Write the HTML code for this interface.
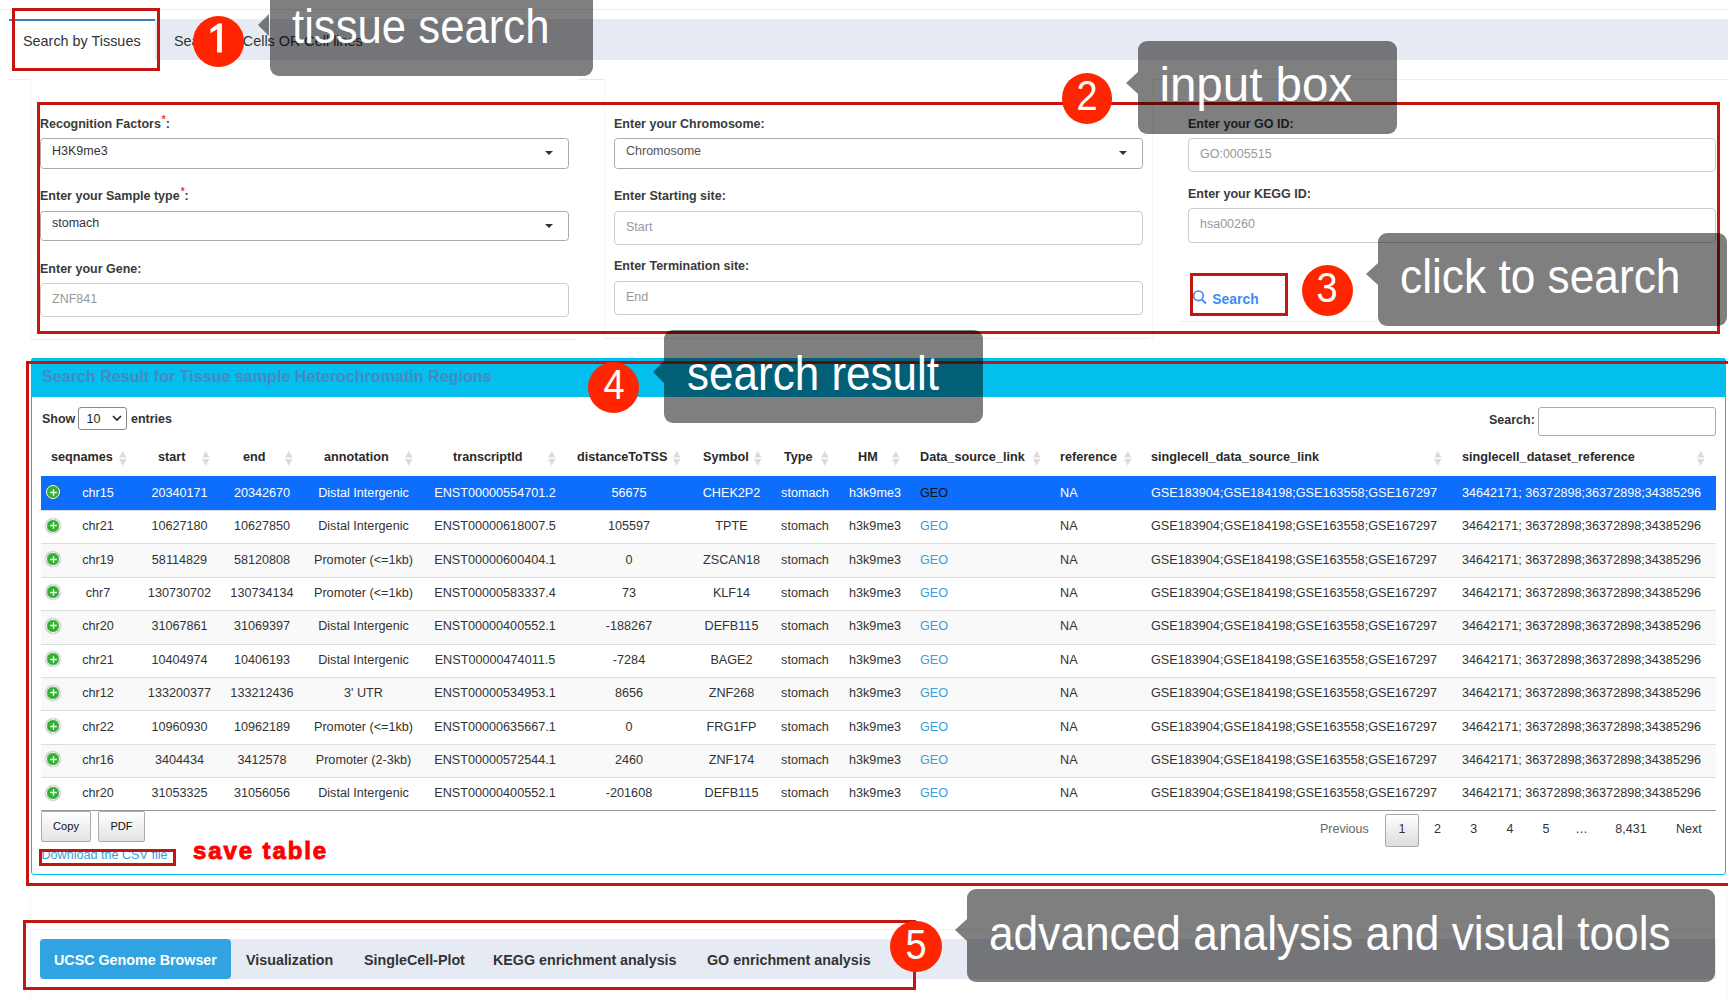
<!DOCTYPE html><html><head><meta charset="utf-8"><style>
html,body{margin:0;padding:0;}
body{width:1728px;height:1002px;position:relative;overflow:hidden;background:#fff;font-family:"Liberation Sans",sans-serif;}
.a,.rb,.t,.c,.l{position:absolute;box-sizing:content-box;}
.c{width:600px;height:40px;line-height:40px;text-align:center;white-space:nowrap;}
.l{height:40px;line-height:40px;white-space:nowrap;}
.t{white-space:nowrap;}
.circ{position:absolute;border-radius:50%;background:#ff2500;color:#fff;text-align:center;font-family:"Liberation Sans",sans-serif;}
.call{position:absolute;background:rgba(0,0,0,0.5);border-radius:9px;}
.arrow{position:absolute;width:0;height:0;border-style:solid;border-color:transparent rgba(0,0,0,0.5) transparent transparent;}
.ct{position:absolute;color:#fff;white-space:nowrap;line-height:1;transform-origin:0 0;}
</style></head><body>

<div class="a" style="left:0px;top:9px;width:1728px;height:1px;background:#ececec"></div>
<div class="a" style="left:155px;top:19px;width:1573px;height:41px;background:#e6ebf3"></div>
<div class="a" style="left:9px;top:19px;width:146px;height:51px;background:#fff"></div>
<div class="a" style="left:9px;top:19px;width:146px;height:2px;background:#3a7fb8"></div>
<div class="l" style="left:23px;top:21px;font-size:14.4px;color:#333;font-weight:normal;">Search by Tissues</div>
<div class="l" style="left:174px;top:21px;font-size:14.4px;color:#333;font-weight:normal;">Search by Cells OR Cell lines</div>
<div class="a" style="left:9px;top:79px;width:22px;height:1px;background:#ececec"></div>
<div class="a" style="left:30px;top:79px;width:1px;height:261px;background:#f4f4f4"></div>
<div class="a" style="left:31px;top:339px;width:546px;height:1px;background:#ededed"></div>
<div class="a" style="left:604px;top:79px;width:1px;height:261px;background:#f4f4f4"></div>
<div class="a" style="left:578px;top:79px;width:27px;height:1px;background:#e8e8e8"></div>
<div class="a" style="left:605px;top:338px;width:545px;height:1px;background:#ededed"></div>
<div class="a" style="left:1152px;top:79px;width:1px;height:261px;background:#f4f4f4"></div>
<div class="a" style="left:1152px;top:79px;width:576px;height:1px;background:#ececec"></div>
<div class="a" style="left:1180px;top:321px;width:200px;height:1px;background:#ededed"></div>
<div class="l" style="left:40px;top:103.9px;font-size:12.5px;color:#3a3a3a;font-weight:bold;">Recognition Factors<span style="color:#e33;font-size:10px;position:relative;top:-4.5px;margin-left:1px">*</span>:</div>
<div class="a" style="left:40px;top:138px;width:529px;height:30.5px;background:#fff;border:1px solid #aaa;border-radius:3.5px;box-sizing:border-box"></div>
<div class="l" style="left:52px;top:130.65px;font-size:12.5px;color:#333;font-weight:normal;">H3K9me3</div>
<div class="a" style="left:545px;top:151.25px;width:0;height:0;border-left:4px solid transparent;border-right:4px solid transparent;border-top:4.5px solid #333"></div>
<div class="l" style="left:40px;top:175.9px;font-size:12.5px;color:#3a3a3a;font-weight:bold;">Enter your Sample type<span style="color:#e33;font-size:10px;position:relative;top:-4.5px;margin-left:1px">*</span>:</div>
<div class="a" style="left:40px;top:211px;width:529px;height:30px;background:#fff;border:1px solid #aaa;border-radius:3.5px;box-sizing:border-box"></div>
<div class="l" style="left:52px;top:203.4px;font-size:12.5px;color:#333;font-weight:normal;">stomach</div>
<div class="a" style="left:545px;top:224.0px;width:0;height:0;border-left:4px solid transparent;border-right:4px solid transparent;border-top:4.5px solid #333"></div>
<div class="l" style="left:40px;top:248.89999999999998px;font-size:12.5px;color:#3a3a3a;font-weight:bold;">Enter your Gene:</div>
<div class="a" style="left:40px;top:283px;width:529px;height:34px;background:#fff;border:1px solid #ccc;border-radius:4px;box-sizing:border-box"></div>
<div class="l" style="left:52px;top:278.9px;font-size:12.5px;color:#999;font-weight:normal;">ZNF841</div>
<div class="l" style="left:614px;top:103.9px;font-size:12.5px;color:#3a3a3a;font-weight:bold;">Enter your Chromosome:</div>
<div class="a" style="left:614px;top:138px;width:529px;height:30.5px;background:#fff;border:1px solid #aaa;border-radius:3.5px;box-sizing:border-box"></div>
<div class="l" style="left:626px;top:130.65px;font-size:12.5px;color:#555;font-weight:normal;">Chromosome</div>
<div class="a" style="left:1119px;top:151.25px;width:0;height:0;border-left:4px solid transparent;border-right:4px solid transparent;border-top:4.5px solid #333"></div>
<div class="l" style="left:614px;top:175.9px;font-size:12.5px;color:#3a3a3a;font-weight:bold;">Enter Starting site:</div>
<div class="a" style="left:614px;top:211px;width:529px;height:34px;background:#fff;border:1px solid #ccc;border-radius:4px;box-sizing:border-box"></div>
<div class="l" style="left:626px;top:206.9px;font-size:12.5px;color:#999;font-weight:normal;">Start</div>
<div class="l" style="left:614px;top:245.89999999999998px;font-size:12.5px;color:#3a3a3a;font-weight:bold;">Enter Termination site:</div>
<div class="a" style="left:614px;top:281px;width:529px;height:34px;background:#fff;border:1px solid #ccc;border-radius:4px;box-sizing:border-box"></div>
<div class="l" style="left:626px;top:276.9px;font-size:12.5px;color:#999;font-weight:normal;">End</div>
<div class="l" style="left:1188px;top:103.9px;font-size:12.5px;color:#3a3a3a;font-weight:bold;">Enter your GO ID:</div>
<div class="a" style="left:1188px;top:138px;width:528px;height:33.80000000000001px;background:#fff;border:1px solid #ccc;border-radius:4px;box-sizing:border-box"></div>
<div class="l" style="left:1200px;top:133.8px;font-size:12.5px;color:#999;font-weight:normal;">GO:0005515</div>
<div class="l" style="left:1188px;top:173.9px;font-size:12.5px;color:#3a3a3a;font-weight:bold;">Enter your KEGG ID:</div>
<div class="a" style="left:1188px;top:208px;width:528px;height:34.5px;background:#fff;border:1px solid #ccc;border-radius:4px;box-sizing:border-box"></div>
<div class="l" style="left:1200px;top:204.15px;font-size:12.5px;color:#999;font-weight:normal;">hsa00260</div>
<svg class="a" style="left:1190px;top:288px" width="20" height="20" viewBox="0 0 20 20"><circle cx="8.4" cy="7.8" r="4.8" fill="none" stroke="#3d8af7" stroke-width="1.6"/><line x1="11.8" y1="11.3" x2="16" y2="15.5" stroke="#3d8af7" stroke-width="1.8"/></svg>
<div class="l" style="left:1212.3px;top:279px;font-size:13.9px;color:#3d8af7;font-weight:bold;">Search</div>
<div class="a" style="left:31px;top:358px;width:1695px;height:517px;border:1px solid #00bdee;border-radius:3px;box-sizing:border-box"></div>
<div class="a" style="left:31px;top:358px;width:1695px;height:39px;background:#02bfee;border-radius:3px 3px 0 0"></div>
<div class="l" style="left:42px;top:356px;font-size:16.1px;color:#4689c3;font-weight:bold;">Search Result for Tissue sample Heterochromatin Regions</div>
<div class="l" style="left:42px;top:399px;font-size:12.5px;color:#333;font-weight:bold;">Show</div>
<div class="a" style="left:78px;top:407px;width:49px;height:22.5px;border:1px solid #888;border-radius:3px;box-sizing:border-box;background:#fff"></div>
<div class="l" style="left:86.5px;top:399px;font-size:12.5px;color:#222;font-weight:normal;">10</div>
<svg class="a" style="left:112px;top:414px" width="10" height="8" viewBox="0 0 10 8"><polyline points="1,2 5,6 9,2" fill="none" stroke="#222" stroke-width="1.6"/></svg>
<div class="l" style="left:131px;top:399px;font-size:12.5px;color:#333;font-weight:bold;">entries</div>
<div class="l" style="left:1489px;top:400px;font-size:12.5px;color:#333;font-weight:bold;">Search:</div>
<div class="a" style="left:1538px;top:407px;width:178px;height:28.5px;border:1px solid #aaa;border-radius:3px;box-sizing:border-box;background:#fff"></div>
<div class="l" style="left:51px;top:436.8px;font-size:12.65px;color:#2a2a2a;font-weight:bold;">seqnames</div>
<svg class="a" style="left:119.4px;top:450px" width="8" height="17" viewBox="0 0 8 17"><polygon points="3.8,1 7.6,7.6 0,7.6" fill="#dcdcdc"/><polygon points="0,9.1 7.6,9.1 3.8,15.8" fill="#dcdcdc"/></svg>
<div class="l" style="left:158px;top:436.8px;font-size:12.65px;color:#2a2a2a;font-weight:bold;">start</div>
<svg class="a" style="left:202.4px;top:450px" width="8" height="17" viewBox="0 0 8 17"><polygon points="3.8,1 7.6,7.6 0,7.6" fill="#dcdcdc"/><polygon points="0,9.1 7.6,9.1 3.8,15.8" fill="#dcdcdc"/></svg>
<div class="l" style="left:243px;top:436.8px;font-size:12.65px;color:#2a2a2a;font-weight:bold;">end</div>
<svg class="a" style="left:285.4px;top:450px" width="8" height="17" viewBox="0 0 8 17"><polygon points="3.8,1 7.6,7.6 0,7.6" fill="#dcdcdc"/><polygon points="0,9.1 7.6,9.1 3.8,15.8" fill="#dcdcdc"/></svg>
<div class="l" style="left:324px;top:436.8px;font-size:12.65px;color:#2a2a2a;font-weight:bold;">annotation</div>
<svg class="a" style="left:405.4px;top:450px" width="8" height="17" viewBox="0 0 8 17"><polygon points="3.8,1 7.6,7.6 0,7.6" fill="#dcdcdc"/><polygon points="0,9.1 7.6,9.1 3.8,15.8" fill="#dcdcdc"/></svg>
<div class="l" style="left:453px;top:436.8px;font-size:12.65px;color:#2a2a2a;font-weight:bold;">transcriptId</div>
<svg class="a" style="left:548.4px;top:450px" width="8" height="17" viewBox="0 0 8 17"><polygon points="3.8,1 7.6,7.6 0,7.6" fill="#dcdcdc"/><polygon points="0,9.1 7.6,9.1 3.8,15.8" fill="#dcdcdc"/></svg>
<div class="l" style="left:577px;top:436.8px;font-size:12.65px;color:#2a2a2a;font-weight:bold;">distanceToTSS</div>
<svg class="a" style="left:673.4px;top:450px" width="8" height="17" viewBox="0 0 8 17"><polygon points="3.8,1 7.6,7.6 0,7.6" fill="#dcdcdc"/><polygon points="0,9.1 7.6,9.1 3.8,15.8" fill="#dcdcdc"/></svg>
<div class="l" style="left:703px;top:436.8px;font-size:12.65px;color:#2a2a2a;font-weight:bold;">Symbol</div>
<svg class="a" style="left:754.4px;top:450px" width="8" height="17" viewBox="0 0 8 17"><polygon points="3.8,1 7.6,7.6 0,7.6" fill="#dcdcdc"/><polygon points="0,9.1 7.6,9.1 3.8,15.8" fill="#dcdcdc"/></svg>
<div class="l" style="left:784px;top:436.8px;font-size:12.65px;color:#2a2a2a;font-weight:bold;">Type</div>
<svg class="a" style="left:821.4px;top:450px" width="8" height="17" viewBox="0 0 8 17"><polygon points="3.8,1 7.6,7.6 0,7.6" fill="#dcdcdc"/><polygon points="0,9.1 7.6,9.1 3.8,15.8" fill="#dcdcdc"/></svg>
<div class="l" style="left:858px;top:436.8px;font-size:12.65px;color:#2a2a2a;font-weight:bold;">HM</div>
<svg class="a" style="left:892.4px;top:450px" width="8" height="17" viewBox="0 0 8 17"><polygon points="3.8,1 7.6,7.6 0,7.6" fill="#dcdcdc"/><polygon points="0,9.1 7.6,9.1 3.8,15.8" fill="#dcdcdc"/></svg>
<div class="l" style="left:920px;top:436.8px;font-size:12.65px;color:#2a2a2a;font-weight:bold;">Data_source_link</div>
<svg class="a" style="left:1033.4px;top:450px" width="8" height="17" viewBox="0 0 8 17"><polygon points="3.8,1 7.6,7.6 0,7.6" fill="#dcdcdc"/><polygon points="0,9.1 7.6,9.1 3.8,15.8" fill="#dcdcdc"/></svg>
<div class="l" style="left:1060px;top:436.8px;font-size:12.65px;color:#2a2a2a;font-weight:bold;">reference</div>
<svg class="a" style="left:1124.4px;top:450px" width="8" height="17" viewBox="0 0 8 17"><polygon points="3.8,1 7.6,7.6 0,7.6" fill="#dcdcdc"/><polygon points="0,9.1 7.6,9.1 3.8,15.8" fill="#dcdcdc"/></svg>
<div class="l" style="left:1151px;top:436.8px;font-size:12.65px;color:#2a2a2a;font-weight:bold;">singlecell_data_source_link</div>
<svg class="a" style="left:1434.4px;top:450px" width="8" height="17" viewBox="0 0 8 17"><polygon points="3.8,1 7.6,7.6 0,7.6" fill="#dcdcdc"/><polygon points="0,9.1 7.6,9.1 3.8,15.8" fill="#dcdcdc"/></svg>
<div class="l" style="left:1462px;top:436.8px;font-size:12.65px;color:#2a2a2a;font-weight:bold;">singlecell_dataset_reference</div>
<svg class="a" style="left:1697.4px;top:450px" width="8" height="17" viewBox="0 0 8 17"><polygon points="3.8,1 7.6,7.6 0,7.6" fill="#dcdcdc"/><polygon points="0,9.1 7.6,9.1 3.8,15.8" fill="#dcdcdc"/></svg>
<div class="a" style="left:41px;top:476px;width:1675px;height:34px;background:#0d6efd"></div>
<div class="a" style="left:46px;top:485.2px;width:12px;height:12px;border-radius:50%;background:#31b131;border:1.5px solid #fff;box-shadow:0 0 2px #555;"></div>
<svg class="a" style="left:47px;top:485.7px" width="13" height="13" viewBox="0 0 13 13"><path d="M6.5 3.2v6.6M3.2 6.5h6.6" stroke="#fff" stroke-width="1.3"/></svg>
<div class="c" style="left:-202px;top:472.8px;font-size:12.65px;color:#fff;font-weight:normal;">chr15</div>
<div class="c" style="left:-120.5px;top:472.8px;font-size:12.65px;color:#fff;font-weight:normal;">20340171</div>
<div class="c" style="left:-38px;top:472.8px;font-size:12.65px;color:#fff;font-weight:normal;">20342670</div>
<div class="c" style="left:63.5px;top:472.8px;font-size:12.65px;color:#fff;font-weight:normal;">Distal Intergenic</div>
<div class="c" style="left:195px;top:472.8px;font-size:12.65px;color:#fff;font-weight:normal;">ENST00000554701.2</div>
<div class="c" style="left:329px;top:472.8px;font-size:12.65px;color:#fff;font-weight:normal;">56675</div>
<div class="c" style="left:431.5px;top:472.8px;font-size:12.65px;color:#fff;font-weight:normal;">CHEK2P2</div>
<div class="c" style="left:505px;top:472.8px;font-size:12.65px;color:#fff;font-weight:normal;">stomach</div>
<div class="c" style="left:575px;top:472.8px;font-size:12.65px;color:#fff;font-weight:normal;">h3k9me3</div>
<div class="l" style="left:920px;top:472.8px;font-size:12.65px;color:#111;font-weight:normal;">GEO</div>
<div class="l" style="left:1060px;top:472.8px;font-size:12.65px;color:#fff;font-weight:normal;">NA</div>
<div class="l" style="left:1151px;top:472.8px;font-size:12.65px;color:#fff;font-weight:normal;">GSE183904;GSE184198;GSE163558;GSE167297</div>
<div class="l" style="left:1462px;top:472.8px;font-size:12.65px;color:#fff;font-weight:normal;">34642171; 36372898;36372898;34385296</div>
<div class="a" style="left:41px;top:510px;width:1675px;height:33px;background:#fff;border-top:1px solid #ddd;box-sizing:border-box"></div>
<div class="a" style="left:46px;top:518.6px;width:12px;height:12px;border-radius:50%;background:#31b131;border:1.5px solid #fff;box-shadow:0 0 2px #555;"></div>
<svg class="a" style="left:47px;top:519.1px" width="13" height="13" viewBox="0 0 13 13"><path d="M6.5 3.2v6.6M3.2 6.5h6.6" stroke="#fff" stroke-width="1.3"/></svg>
<div class="c" style="left:-202px;top:506.20000000000005px;font-size:12.65px;color:#333;font-weight:normal;">chr21</div>
<div class="c" style="left:-120.5px;top:506.20000000000005px;font-size:12.65px;color:#333;font-weight:normal;">10627180</div>
<div class="c" style="left:-38px;top:506.20000000000005px;font-size:12.65px;color:#333;font-weight:normal;">10627850</div>
<div class="c" style="left:63.5px;top:506.20000000000005px;font-size:12.65px;color:#333;font-weight:normal;">Distal Intergenic</div>
<div class="c" style="left:195px;top:506.20000000000005px;font-size:12.65px;color:#333;font-weight:normal;">ENST00000618007.5</div>
<div class="c" style="left:329px;top:506.20000000000005px;font-size:12.65px;color:#333;font-weight:normal;">105597</div>
<div class="c" style="left:431.5px;top:506.20000000000005px;font-size:12.65px;color:#333;font-weight:normal;">TPTE</div>
<div class="c" style="left:505px;top:506.20000000000005px;font-size:12.65px;color:#333;font-weight:normal;">stomach</div>
<div class="c" style="left:575px;top:506.20000000000005px;font-size:12.65px;color:#333;font-weight:normal;">h3k9me3</div>
<div class="l" style="left:920px;top:506.20000000000005px;font-size:12.65px;color:#3c9ddc;font-weight:normal;">GEO</div>
<div class="l" style="left:1060px;top:506.20000000000005px;font-size:12.65px;color:#333;font-weight:normal;">NA</div>
<div class="l" style="left:1151px;top:506.20000000000005px;font-size:12.65px;color:#333;font-weight:normal;">GSE183904;GSE184198;GSE163558;GSE167297</div>
<div class="l" style="left:1462px;top:506.20000000000005px;font-size:12.65px;color:#333;font-weight:normal;">34642171; 36372898;36372898;34385296</div>
<div class="a" style="left:41px;top:543px;width:1675px;height:34px;background:#f9f9f9;border-top:1px solid #ddd;box-sizing:border-box"></div>
<div class="a" style="left:46px;top:552.0px;width:12px;height:12px;border-radius:50%;background:#31b131;border:1.5px solid #fff;box-shadow:0 0 2px #555;"></div>
<svg class="a" style="left:47px;top:552.5px" width="13" height="13" viewBox="0 0 13 13"><path d="M6.5 3.2v6.6M3.2 6.5h6.6" stroke="#fff" stroke-width="1.3"/></svg>
<div class="c" style="left:-202px;top:539.6px;font-size:12.65px;color:#333;font-weight:normal;">chr19</div>
<div class="c" style="left:-120.5px;top:539.6px;font-size:12.65px;color:#333;font-weight:normal;">58114829</div>
<div class="c" style="left:-38px;top:539.6px;font-size:12.65px;color:#333;font-weight:normal;">58120808</div>
<div class="c" style="left:63.5px;top:539.6px;font-size:12.65px;color:#333;font-weight:normal;">Promoter (&lt;=1kb)</div>
<div class="c" style="left:195px;top:539.6px;font-size:12.65px;color:#333;font-weight:normal;">ENST00000600404.1</div>
<div class="c" style="left:329px;top:539.6px;font-size:12.65px;color:#333;font-weight:normal;">0</div>
<div class="c" style="left:431.5px;top:539.6px;font-size:12.65px;color:#333;font-weight:normal;">ZSCAN18</div>
<div class="c" style="left:505px;top:539.6px;font-size:12.65px;color:#333;font-weight:normal;">stomach</div>
<div class="c" style="left:575px;top:539.6px;font-size:12.65px;color:#333;font-weight:normal;">h3k9me3</div>
<div class="l" style="left:920px;top:539.6px;font-size:12.65px;color:#3c9ddc;font-weight:normal;">GEO</div>
<div class="l" style="left:1060px;top:539.6px;font-size:12.65px;color:#333;font-weight:normal;">NA</div>
<div class="l" style="left:1151px;top:539.6px;font-size:12.65px;color:#333;font-weight:normal;">GSE183904;GSE184198;GSE163558;GSE167297</div>
<div class="l" style="left:1462px;top:539.6px;font-size:12.65px;color:#333;font-weight:normal;">34642171; 36372898;36372898;34385296</div>
<div class="a" style="left:41px;top:577px;width:1675px;height:33px;background:#fff;border-top:1px solid #ddd;box-sizing:border-box"></div>
<div class="a" style="left:46px;top:585.4000000000001px;width:12px;height:12px;border-radius:50%;background:#31b131;border:1.5px solid #fff;box-shadow:0 0 2px #555;"></div>
<svg class="a" style="left:47px;top:585.9000000000001px" width="13" height="13" viewBox="0 0 13 13"><path d="M6.5 3.2v6.6M3.2 6.5h6.6" stroke="#fff" stroke-width="1.3"/></svg>
<div class="c" style="left:-202px;top:573.0000000000001px;font-size:12.65px;color:#333;font-weight:normal;">chr7</div>
<div class="c" style="left:-120.5px;top:573.0000000000001px;font-size:12.65px;color:#333;font-weight:normal;">130730702</div>
<div class="c" style="left:-38px;top:573.0000000000001px;font-size:12.65px;color:#333;font-weight:normal;">130734134</div>
<div class="c" style="left:63.5px;top:573.0000000000001px;font-size:12.65px;color:#333;font-weight:normal;">Promoter (&lt;=1kb)</div>
<div class="c" style="left:195px;top:573.0000000000001px;font-size:12.65px;color:#333;font-weight:normal;">ENST00000583337.4</div>
<div class="c" style="left:329px;top:573.0000000000001px;font-size:12.65px;color:#333;font-weight:normal;">73</div>
<div class="c" style="left:431.5px;top:573.0000000000001px;font-size:12.65px;color:#333;font-weight:normal;">KLF14</div>
<div class="c" style="left:505px;top:573.0000000000001px;font-size:12.65px;color:#333;font-weight:normal;">stomach</div>
<div class="c" style="left:575px;top:573.0000000000001px;font-size:12.65px;color:#333;font-weight:normal;">h3k9me3</div>
<div class="l" style="left:920px;top:573.0000000000001px;font-size:12.65px;color:#3c9ddc;font-weight:normal;">GEO</div>
<div class="l" style="left:1060px;top:573.0000000000001px;font-size:12.65px;color:#333;font-weight:normal;">NA</div>
<div class="l" style="left:1151px;top:573.0000000000001px;font-size:12.65px;color:#333;font-weight:normal;">GSE183904;GSE184198;GSE163558;GSE167297</div>
<div class="l" style="left:1462px;top:573.0000000000001px;font-size:12.65px;color:#333;font-weight:normal;">34642171; 36372898;36372898;34385296</div>
<div class="a" style="left:41px;top:610px;width:1675px;height:34px;background:#f9f9f9;border-top:1px solid #ddd;box-sizing:border-box"></div>
<div class="a" style="left:46px;top:618.8000000000001px;width:12px;height:12px;border-radius:50%;background:#31b131;border:1.5px solid #fff;box-shadow:0 0 2px #555;"></div>
<svg class="a" style="left:47px;top:619.3000000000001px" width="13" height="13" viewBox="0 0 13 13"><path d="M6.5 3.2v6.6M3.2 6.5h6.6" stroke="#fff" stroke-width="1.3"/></svg>
<div class="c" style="left:-202px;top:606.4000000000001px;font-size:12.65px;color:#333;font-weight:normal;">chr20</div>
<div class="c" style="left:-120.5px;top:606.4000000000001px;font-size:12.65px;color:#333;font-weight:normal;">31067861</div>
<div class="c" style="left:-38px;top:606.4000000000001px;font-size:12.65px;color:#333;font-weight:normal;">31069397</div>
<div class="c" style="left:63.5px;top:606.4000000000001px;font-size:12.65px;color:#333;font-weight:normal;">Distal Intergenic</div>
<div class="c" style="left:195px;top:606.4000000000001px;font-size:12.65px;color:#333;font-weight:normal;">ENST00000400552.1</div>
<div class="c" style="left:329px;top:606.4000000000001px;font-size:12.65px;color:#333;font-weight:normal;">-188267</div>
<div class="c" style="left:431.5px;top:606.4000000000001px;font-size:12.65px;color:#333;font-weight:normal;">DEFB115</div>
<div class="c" style="left:505px;top:606.4000000000001px;font-size:12.65px;color:#333;font-weight:normal;">stomach</div>
<div class="c" style="left:575px;top:606.4000000000001px;font-size:12.65px;color:#333;font-weight:normal;">h3k9me3</div>
<div class="l" style="left:920px;top:606.4000000000001px;font-size:12.65px;color:#3c9ddc;font-weight:normal;">GEO</div>
<div class="l" style="left:1060px;top:606.4000000000001px;font-size:12.65px;color:#333;font-weight:normal;">NA</div>
<div class="l" style="left:1151px;top:606.4000000000001px;font-size:12.65px;color:#333;font-weight:normal;">GSE183904;GSE184198;GSE163558;GSE167297</div>
<div class="l" style="left:1462px;top:606.4000000000001px;font-size:12.65px;color:#333;font-weight:normal;">34642171; 36372898;36372898;34385296</div>
<div class="a" style="left:41px;top:644px;width:1675px;height:33px;background:#fff;border-top:1px solid #ddd;box-sizing:border-box"></div>
<div class="a" style="left:46px;top:652.2px;width:12px;height:12px;border-radius:50%;background:#31b131;border:1.5px solid #fff;box-shadow:0 0 2px #555;"></div>
<svg class="a" style="left:47px;top:652.7px" width="13" height="13" viewBox="0 0 13 13"><path d="M6.5 3.2v6.6M3.2 6.5h6.6" stroke="#fff" stroke-width="1.3"/></svg>
<div class="c" style="left:-202px;top:639.8000000000001px;font-size:12.65px;color:#333;font-weight:normal;">chr21</div>
<div class="c" style="left:-120.5px;top:639.8000000000001px;font-size:12.65px;color:#333;font-weight:normal;">10404974</div>
<div class="c" style="left:-38px;top:639.8000000000001px;font-size:12.65px;color:#333;font-weight:normal;">10406193</div>
<div class="c" style="left:63.5px;top:639.8000000000001px;font-size:12.65px;color:#333;font-weight:normal;">Distal Intergenic</div>
<div class="c" style="left:195px;top:639.8000000000001px;font-size:12.65px;color:#333;font-weight:normal;">ENST00000474011.5</div>
<div class="c" style="left:329px;top:639.8000000000001px;font-size:12.65px;color:#333;font-weight:normal;">-7284</div>
<div class="c" style="left:431.5px;top:639.8000000000001px;font-size:12.65px;color:#333;font-weight:normal;">BAGE2</div>
<div class="c" style="left:505px;top:639.8000000000001px;font-size:12.65px;color:#333;font-weight:normal;">stomach</div>
<div class="c" style="left:575px;top:639.8000000000001px;font-size:12.65px;color:#333;font-weight:normal;">h3k9me3</div>
<div class="l" style="left:920px;top:639.8000000000001px;font-size:12.65px;color:#3c9ddc;font-weight:normal;">GEO</div>
<div class="l" style="left:1060px;top:639.8000000000001px;font-size:12.65px;color:#333;font-weight:normal;">NA</div>
<div class="l" style="left:1151px;top:639.8000000000001px;font-size:12.65px;color:#333;font-weight:normal;">GSE183904;GSE184198;GSE163558;GSE167297</div>
<div class="l" style="left:1462px;top:639.8000000000001px;font-size:12.65px;color:#333;font-weight:normal;">34642171; 36372898;36372898;34385296</div>
<div class="a" style="left:41px;top:677px;width:1675px;height:33px;background:#f9f9f9;border-top:1px solid #ddd;box-sizing:border-box"></div>
<div class="a" style="left:46px;top:685.6px;width:12px;height:12px;border-radius:50%;background:#31b131;border:1.5px solid #fff;box-shadow:0 0 2px #555;"></div>
<svg class="a" style="left:47px;top:686.1px" width="13" height="13" viewBox="0 0 13 13"><path d="M6.5 3.2v6.6M3.2 6.5h6.6" stroke="#fff" stroke-width="1.3"/></svg>
<div class="c" style="left:-202px;top:673.2px;font-size:12.65px;color:#333;font-weight:normal;">chr12</div>
<div class="c" style="left:-120.5px;top:673.2px;font-size:12.65px;color:#333;font-weight:normal;">133200377</div>
<div class="c" style="left:-38px;top:673.2px;font-size:12.65px;color:#333;font-weight:normal;">133212436</div>
<div class="c" style="left:63.5px;top:673.2px;font-size:12.65px;color:#333;font-weight:normal;">3' UTR</div>
<div class="c" style="left:195px;top:673.2px;font-size:12.65px;color:#333;font-weight:normal;">ENST00000534953.1</div>
<div class="c" style="left:329px;top:673.2px;font-size:12.65px;color:#333;font-weight:normal;">8656</div>
<div class="c" style="left:431.5px;top:673.2px;font-size:12.65px;color:#333;font-weight:normal;">ZNF268</div>
<div class="c" style="left:505px;top:673.2px;font-size:12.65px;color:#333;font-weight:normal;">stomach</div>
<div class="c" style="left:575px;top:673.2px;font-size:12.65px;color:#333;font-weight:normal;">h3k9me3</div>
<div class="l" style="left:920px;top:673.2px;font-size:12.65px;color:#3c9ddc;font-weight:normal;">GEO</div>
<div class="l" style="left:1060px;top:673.2px;font-size:12.65px;color:#333;font-weight:normal;">NA</div>
<div class="l" style="left:1151px;top:673.2px;font-size:12.65px;color:#333;font-weight:normal;">GSE183904;GSE184198;GSE163558;GSE167297</div>
<div class="l" style="left:1462px;top:673.2px;font-size:12.65px;color:#333;font-weight:normal;">34642171; 36372898;36372898;34385296</div>
<div class="a" style="left:41px;top:710px;width:1675px;height:34px;background:#fff;border-top:1px solid #ddd;box-sizing:border-box"></div>
<div class="a" style="left:46px;top:719.0px;width:12px;height:12px;border-radius:50%;background:#31b131;border:1.5px solid #fff;box-shadow:0 0 2px #555;"></div>
<svg class="a" style="left:47px;top:719.5px" width="13" height="13" viewBox="0 0 13 13"><path d="M6.5 3.2v6.6M3.2 6.5h6.6" stroke="#fff" stroke-width="1.3"/></svg>
<div class="c" style="left:-202px;top:706.6px;font-size:12.65px;color:#333;font-weight:normal;">chr22</div>
<div class="c" style="left:-120.5px;top:706.6px;font-size:12.65px;color:#333;font-weight:normal;">10960930</div>
<div class="c" style="left:-38px;top:706.6px;font-size:12.65px;color:#333;font-weight:normal;">10962189</div>
<div class="c" style="left:63.5px;top:706.6px;font-size:12.65px;color:#333;font-weight:normal;">Promoter (&lt;=1kb)</div>
<div class="c" style="left:195px;top:706.6px;font-size:12.65px;color:#333;font-weight:normal;">ENST00000635667.1</div>
<div class="c" style="left:329px;top:706.6px;font-size:12.65px;color:#333;font-weight:normal;">0</div>
<div class="c" style="left:431.5px;top:706.6px;font-size:12.65px;color:#333;font-weight:normal;">FRG1FP</div>
<div class="c" style="left:505px;top:706.6px;font-size:12.65px;color:#333;font-weight:normal;">stomach</div>
<div class="c" style="left:575px;top:706.6px;font-size:12.65px;color:#333;font-weight:normal;">h3k9me3</div>
<div class="l" style="left:920px;top:706.6px;font-size:12.65px;color:#3c9ddc;font-weight:normal;">GEO</div>
<div class="l" style="left:1060px;top:706.6px;font-size:12.65px;color:#333;font-weight:normal;">NA</div>
<div class="l" style="left:1151px;top:706.6px;font-size:12.65px;color:#333;font-weight:normal;">GSE183904;GSE184198;GSE163558;GSE167297</div>
<div class="l" style="left:1462px;top:706.6px;font-size:12.65px;color:#333;font-weight:normal;">34642171; 36372898;36372898;34385296</div>
<div class="a" style="left:41px;top:744px;width:1675px;height:33px;background:#f9f9f9;border-top:1px solid #ddd;box-sizing:border-box"></div>
<div class="a" style="left:46px;top:752.4000000000001px;width:12px;height:12px;border-radius:50%;background:#31b131;border:1.5px solid #fff;box-shadow:0 0 2px #555;"></div>
<svg class="a" style="left:47px;top:752.9000000000001px" width="13" height="13" viewBox="0 0 13 13"><path d="M6.5 3.2v6.6M3.2 6.5h6.6" stroke="#fff" stroke-width="1.3"/></svg>
<div class="c" style="left:-202px;top:740.0000000000001px;font-size:12.65px;color:#333;font-weight:normal;">chr16</div>
<div class="c" style="left:-120.5px;top:740.0000000000001px;font-size:12.65px;color:#333;font-weight:normal;">3404434</div>
<div class="c" style="left:-38px;top:740.0000000000001px;font-size:12.65px;color:#333;font-weight:normal;">3412578</div>
<div class="c" style="left:63.5px;top:740.0000000000001px;font-size:12.65px;color:#333;font-weight:normal;">Promoter (2-3kb)</div>
<div class="c" style="left:195px;top:740.0000000000001px;font-size:12.65px;color:#333;font-weight:normal;">ENST00000572544.1</div>
<div class="c" style="left:329px;top:740.0000000000001px;font-size:12.65px;color:#333;font-weight:normal;">2460</div>
<div class="c" style="left:431.5px;top:740.0000000000001px;font-size:12.65px;color:#333;font-weight:normal;">ZNF174</div>
<div class="c" style="left:505px;top:740.0000000000001px;font-size:12.65px;color:#333;font-weight:normal;">stomach</div>
<div class="c" style="left:575px;top:740.0000000000001px;font-size:12.65px;color:#333;font-weight:normal;">h3k9me3</div>
<div class="l" style="left:920px;top:740.0000000000001px;font-size:12.65px;color:#3c9ddc;font-weight:normal;">GEO</div>
<div class="l" style="left:1060px;top:740.0000000000001px;font-size:12.65px;color:#333;font-weight:normal;">NA</div>
<div class="l" style="left:1151px;top:740.0000000000001px;font-size:12.65px;color:#333;font-weight:normal;">GSE183904;GSE184198;GSE163558;GSE167297</div>
<div class="l" style="left:1462px;top:740.0000000000001px;font-size:12.65px;color:#333;font-weight:normal;">34642171; 36372898;36372898;34385296</div>
<div class="a" style="left:41px;top:777px;width:1675px;height:33px;background:#fff;border-top:1px solid #ddd;box-sizing:border-box"></div>
<div class="a" style="left:46px;top:785.8px;width:12px;height:12px;border-radius:50%;background:#31b131;border:1.5px solid #fff;box-shadow:0 0 2px #555;"></div>
<svg class="a" style="left:47px;top:786.3px" width="13" height="13" viewBox="0 0 13 13"><path d="M6.5 3.2v6.6M3.2 6.5h6.6" stroke="#fff" stroke-width="1.3"/></svg>
<div class="c" style="left:-202px;top:773.4px;font-size:12.65px;color:#333;font-weight:normal;">chr20</div>
<div class="c" style="left:-120.5px;top:773.4px;font-size:12.65px;color:#333;font-weight:normal;">31053325</div>
<div class="c" style="left:-38px;top:773.4px;font-size:12.65px;color:#333;font-weight:normal;">31056056</div>
<div class="c" style="left:63.5px;top:773.4px;font-size:12.65px;color:#333;font-weight:normal;">Distal Intergenic</div>
<div class="c" style="left:195px;top:773.4px;font-size:12.65px;color:#333;font-weight:normal;">ENST00000400552.1</div>
<div class="c" style="left:329px;top:773.4px;font-size:12.65px;color:#333;font-weight:normal;">-201608</div>
<div class="c" style="left:431.5px;top:773.4px;font-size:12.65px;color:#333;font-weight:normal;">DEFB115</div>
<div class="c" style="left:505px;top:773.4px;font-size:12.65px;color:#333;font-weight:normal;">stomach</div>
<div class="c" style="left:575px;top:773.4px;font-size:12.65px;color:#333;font-weight:normal;">h3k9me3</div>
<div class="l" style="left:920px;top:773.4px;font-size:12.65px;color:#3c9ddc;font-weight:normal;">GEO</div>
<div class="l" style="left:1060px;top:773.4px;font-size:12.65px;color:#333;font-weight:normal;">NA</div>
<div class="l" style="left:1151px;top:773.4px;font-size:12.65px;color:#333;font-weight:normal;">GSE183904;GSE184198;GSE163558;GSE167297</div>
<div class="l" style="left:1462px;top:773.4px;font-size:12.65px;color:#333;font-weight:normal;">34642171; 36372898;36372898;34385296</div>
<div class="a" style="left:41px;top:810px;width:1675px;height:1px;background:#999"></div>
<div class="a" style="left:41px;top:811px;width:50px;height:31px;border:1px solid #aaa;border-radius:2px;box-sizing:border-box;background:linear-gradient(#fff,#e3e3e3)"></div>
<div class="c" style="left:-234.0px;top:805.8px;font-size:11.1px;color:#111;font-weight:normal;">Copy</div>
<div class="a" style="left:98px;top:811px;width:47px;height:31px;border:1px solid #aaa;border-radius:2px;box-sizing:border-box;background:linear-gradient(#fff,#e3e3e3)"></div>
<div class="c" style="left:-178.5px;top:805.8px;font-size:11.1px;color:#111;font-weight:normal;">PDF</div>
<div class="l" style="left:41.5px;top:834.5px;font-size:12.6px;color:#3c9ddc;font-weight:normal;">Download the CSV file</div>
<div class="l" style="left:1320px;top:808.8px;font-size:12.5px;color:#666;font-weight:normal;">Previous</div>
<div class="a" style="left:1385px;top:814px;width:34px;height:33px;border:1px solid #aaa;border-radius:2px;box-sizing:border-box;background:linear-gradient(#fff,#dcdcdc)"></div>
<div class="c" style="left:1102px;top:808.8px;font-size:12.5px;color:#333;font-weight:normal;">1</div>
<div class="c" style="left:1137.6px;top:808.8px;font-size:12.5px;color:#333;font-weight:normal;">2</div>
<div class="c" style="left:1173.8px;top:808.8px;font-size:12.5px;color:#333;font-weight:normal;">3</div>
<div class="c" style="left:1210px;top:808.8px;font-size:12.5px;color:#333;font-weight:normal;">4</div>
<div class="c" style="left:1246px;top:808.8px;font-size:12.5px;color:#333;font-weight:normal;">5</div>
<div class="c" style="left:1281.5px;top:808.8px;font-size:12.5px;color:#333;font-weight:normal;">…</div>
<div class="c" style="left:1331px;top:808.8px;font-size:12.5px;color:#333;font-weight:normal;">8,431</div>
<div class="l" style="left:1676px;top:808.8px;font-size:12.5px;color:#333;font-weight:normal;">Next</div>
<div class="a" style="left:31px;top:929px;width:1685px;height:1px;background:#f0f0f0"></div>
<div class="a" style="left:1726px;top:890px;width:1px;height:112px;background:#f4f4f4"></div>
<div class="a" style="left:30px;top:895px;width:1px;height:107px;background:#f6f6f6"></div>
<div class="a" style="left:40px;top:939px;width:1676px;height:40px;background:#e6ebf3"></div>
<div class="a" style="left:40px;top:939px;width:191px;height:40px;background:#32a3e2;border-radius:4px"></div>
<div class="l" style="left:54px;top:940px;font-size:14.3px;color:#fff;font-weight:bold;">UCSC Genome Browser</div>
<div class="l" style="left:246px;top:940px;font-size:14.3px;color:#333;font-weight:bold;">Visualization</div>
<div class="l" style="left:364px;top:940px;font-size:14.3px;color:#333;font-weight:bold;">SingleCell-Plot</div>
<div class="l" style="left:493px;top:940px;font-size:14.3px;color:#333;font-weight:bold;">KEGG enrichment analysis</div>
<div class="l" style="left:707px;top:940px;font-size:14.3px;color:#333;font-weight:bold;">GO enrichment analysis</div>
<div class="rb" style="left:12px;top:8px;width:142px;height:57px;border:3px solid #c3160e"></div>
<div class="rb" style="left:37px;top:102.2px;width:1676.5px;height:225.8px;border:3px solid #c3160e"></div>
<div class="rb" style="left:1189.7px;top:273.3px;width:92.0px;height:36.30000000000001px;border:3px solid #c3160e"></div>
<div class="rb" style="left:25.5px;top:361px;width:1708.5px;height:519px;border:3px solid #c3160e"></div>
<div class="rb" style="left:39px;top:849px;width:131px;height:11px;border:3px solid #c3160e"></div>
<div class="rb" style="left:23px;top:920px;width:887px;height:64px;border:3px solid #c3160e"></div>
<div class="l" style="left:193px;top:830.6px;font-size:24px;color:#f00;font-weight:bold;letter-spacing:1.9px;-webkit-text-stroke:0.9px #f00">save table</div>
<div class="call" style="left:269.5px;top:-20px;width:323.0px;height:96.2px"></div>
<div class="arrow" style="left:258px;top:13.7px;border-width:11.5px 11.5px 11.5px 0"></div>
<div class="ct" style="left:292px;top:3.212499999999996px;font-size:47.5px;transform:scaleX(0.92)">tissue search</div>
<div class="circ" style="left:193.0px;top:15.999999999999996px;width:50.6px;height:50.6px;"></div>
<svg class="a" style="left:188.3px;top:11.299999999999997px" width="60" height="60" viewBox="0 0 60 60"><path d="M33.9 12.4 L33.9 41.6 L29.1 41.6 L29.1 18.2 L22.4 22.2 L22.4 18.2 L30.3 12.4 Z" fill="#fff"/></svg>
<div class="call" style="left:1138px;top:41px;width:259px;height:93px"></div>
<div class="arrow" style="left:1126px;top:71.7px;border-width:11.5px 12px 11.5px 0"></div>
<div class="ct" style="left:1159.4px;top:61.2125px;font-size:47.5px;transform:scaleX(1.0)">input box</div>
<div class="circ" style="left:1061.5px;top:73.2px;width:50.6px;height:50.6px;"></div>
<div class="c" style="left:786.8px;top:76.2px;font-size:42.2px;color:#fff;transform:scaleX(0.9)">2</div>
<div class="call" style="left:1378px;top:233px;width:349px;height:93px"></div>
<div class="arrow" style="left:1366px;top:263.1px;border-width:11.5px 12px 11.5px 0"></div>
<div class="ct" style="left:1400.4px;top:253.41249999999997px;font-size:47.5px;transform:scaleX(0.932)">click to search</div>
<div class="circ" style="left:1301.9px;top:265.0px;width:51.0px;height:51.0px;"></div>
<div class="c" style="left:1027.4px;top:268.2px;font-size:42.2px;color:#fff;transform:scaleX(0.9)">3</div>
<div class="call" style="left:664px;top:330px;width:319px;height:93px"></div>
<div class="arrow" style="left:653px;top:360.5px;border-width:11.5px 11px 11.5px 0"></div>
<div class="ct" style="left:686.6px;top:350.3125px;font-size:47.5px;transform:scaleX(0.927)">search result</div>
<div class="circ" style="left:588.0px;top:362.0px;width:51.0px;height:51.0px;"></div>
<div class="c" style="left:313.5px;top:365.2px;font-size:42.2px;color:#fff;transform:scaleX(0.9)">4</div>
<div class="call" style="left:967px;top:889px;width:748px;height:93px"></div>
<div class="arrow" style="left:955px;top:919.0px;border-width:11.5px 12px 11.5px 0"></div>
<div class="ct" style="left:988.7px;top:909.6125000000001px;font-size:47.5px;transform:scaleX(0.932)">advanced analysis and visual tools</div>
<div class="circ" style="left:890.4px;top:921.1999999999999px;width:51.2px;height:51.2px;"></div>
<div class="c" style="left:616px;top:924.5px;font-size:42.2px;color:#fff;transform:scaleX(0.9)">5</div>
</body></html>
